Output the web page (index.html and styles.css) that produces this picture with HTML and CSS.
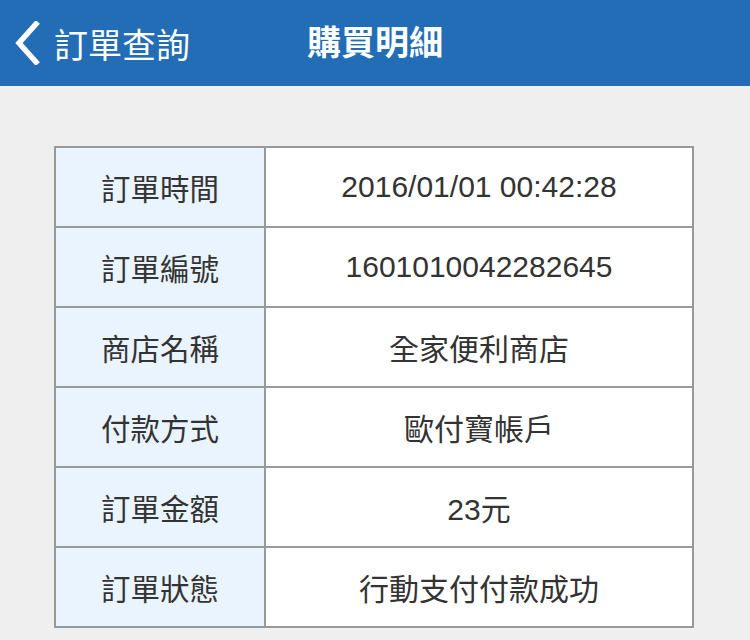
FILE: index.html
```html
<!DOCTYPE html>
<html lang="zh-Hant">
<head>
<meta charset="utf-8">
<link rel="stylesheet" href="styles.css">
</head>
<body>
<header class="nav">
  <div class="back">
    <svg class="chev" width="30" height="44" viewBox="0 0 30 44"><path d="M22 3 L5 22 L22 41" fill="none" stroke="#ffffff" stroke-width="5.5" stroke-linecap="square"/></svg>
    <span class="back-text">訂單查詢</span>
  </div>
  <div class="title">購買明細</div>
</header>
<main class="content">
  <table class="detail">
    <tr><th>訂單時間</th><td>2016/01/01 00:42:28</td></tr>
    <tr><th>訂單編號</th><td>1601010042282645</td></tr>
    <tr><th>商店名稱</th><td>全家便利商店</td></tr>
    <tr><th>付款方式</th><td>歐付寶帳戶</td></tr>
    <tr><th>訂單金額</th><td>23元</td></tr>
    <tr><th>訂單狀態</th><td>行動支付付款成功</td></tr>
  </table>
</main>
</body>
</html>
```
FILE: styles.css
```css
html, body {
  margin: 0;
  padding: 0;
}
body {
  width: 750px;
  height: 640px;
  overflow: hidden;
  background: #efefef;
  font-family: "Liberation Sans", "Noto Sans CJK TC", sans-serif;
  color: #333333;
}
.nav {
  position: relative;
  height: 86px;
  background: #236db7;
  color: #ffffff;
}
.back {
  position: absolute;
  left: 14px;
  top: 0;
  height: 86px;
  display: flex;
  align-items: center;
  gap: 10px;
}
.chev {
  display: block;
}
.back-text {
  font-size: 34px;
}
.title {
  text-align: center;
  line-height: 86px;
  font-size: 34px;
  font-weight: bold;
}
.content {
  padding: 60px 0 0 54px;
}
.detail {
  border-collapse: collapse;
  width: 640px;
  border: 2px solid #999999;
}
.detail th, .detail td {
  border: 2px solid #999999;
  height: 78px;
  padding: 0;
  text-align: center;
  font-size: 30px;
  font-weight: normal;
  color: #333333;
}
.detail th {
  width: 208px;
  font-size: 29.5px;
  background: #eaf4fe;
}
.detail td {
  background: #ffffff;
}
```
